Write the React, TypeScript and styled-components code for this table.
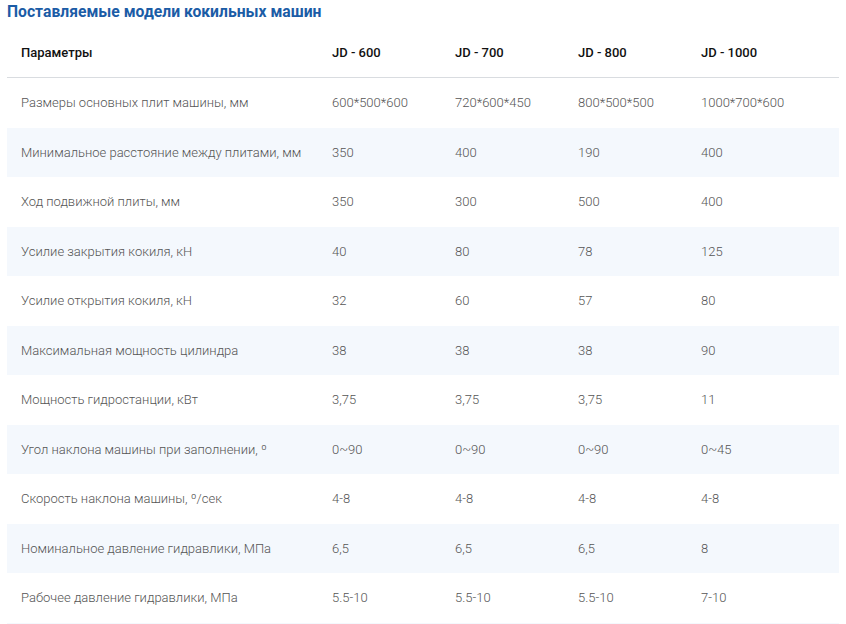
import React from "react";
import styled, { createGlobalStyle } from "styled-components";

const Global = createGlobalStyle`
  html, body { margin: 0; padding: 0; background: #fff; overflow: hidden; }
  body { font-family: Roboto, "Noto Sans", Arial, sans-serif; }
`;

const Page = styled.div`
  padding: 0 7px;
  width: 832px;
`;

const Title = styled.h2`
  margin: 0;
  padding: 2px 0 0 0;
  font-size: 15.7px;
  line-height: 20px;
  font-weight: 700;
  color: #1b5ca6;
`;

const Table = styled.table`
  width: 832px;
  border-collapse: collapse;
  margin-top: 7px;
  table-layout: fixed;
`;

const HeadCell = styled.th<{ $w?: number }>`
  text-align: left;
  font-weight: 500;
  font-size: 13px;
  color: #111;
  padding: 0 14px 2px;
  height: 46px;
  border-bottom: 1.5px solid #d9dce0;
  white-space: nowrap;
  width: ${(p) => (p.$w ? `${p.$w - 28}px` : "auto")};
`;

const Row = styled.tr<{ $shade: boolean }>`
  background: ${(p) => (p.$shade ? "#f4f8fd" : "#fff")};
`;

const Cell = styled.td`
  padding: 0 14px;
  height: 49.5px;
  font-size: 13px;
  color: #555;
  font-weight: 300;
  white-space: nowrap;
`;

const cols = ["JD - 600", "JD - 700", "JD - 800", "JD - 1000"];

const rows: [string, string, string, string, string][] = [
  ["Размеры основных плит машины, мм", "600*500*600", "720*600*450", "800*500*500", "1000*700*600"],
  ["Минимальное расстояние между плитами, мм", "350", "400", "190", "400"],
  ["Ход подвижной плиты, мм", "350", "300", "500", "400"],
  ["Усилие закрытия кокиля, кН", "40", "80", "78", "125"],
  ["Усилие открытия кокиля, кН", "32", "60", "57", "80"],
  ["Максимальная мощность цилиндра", "38", "38", "38", "90"],
  ["Мощность гидростанции, кВт", "3,75", "3,75", "3,75", "11"],
  ["Угол наклона машины при заполнении, º", "0~90", "0~90", "0~90", "0~45"],
  ["Скорость наклона машины, º/сек", "4-8", "4-8", "4-8", "4-8"],
  ["Номинальное давление гидравлики, МПа", "6,5", "6,5", "6,5", "8"],
  ["Рабочее давление гидравлики, МПа", "5.5-10", "5.5-10", "5.5-10", "7-10"],
  ["", "", "", "", ""],
];

export default function App() {
  return (
    <Page>
      <Global />
      <Title>Поставляемые модели кокильных машин</Title>
      <Table>
        <thead>
          <tr>
            <HeadCell $w={311}>Параметры</HeadCell>
            {cols.map((c, i) => (
              <HeadCell key={c} $w={i < 3 ? 123 : undefined}>
                {c}
              </HeadCell>
            ))}
          </tr>
        </thead>
        <tbody>
          {rows.map((r, i) => (
            <Row key={i} $shade={i % 2 === 1}>
              {r.map((v, j) => (
                <Cell key={j}>{v}</Cell>
              ))}
            </Row>
          ))}
        </tbody>
      </Table>
    </Page>
  );
}
